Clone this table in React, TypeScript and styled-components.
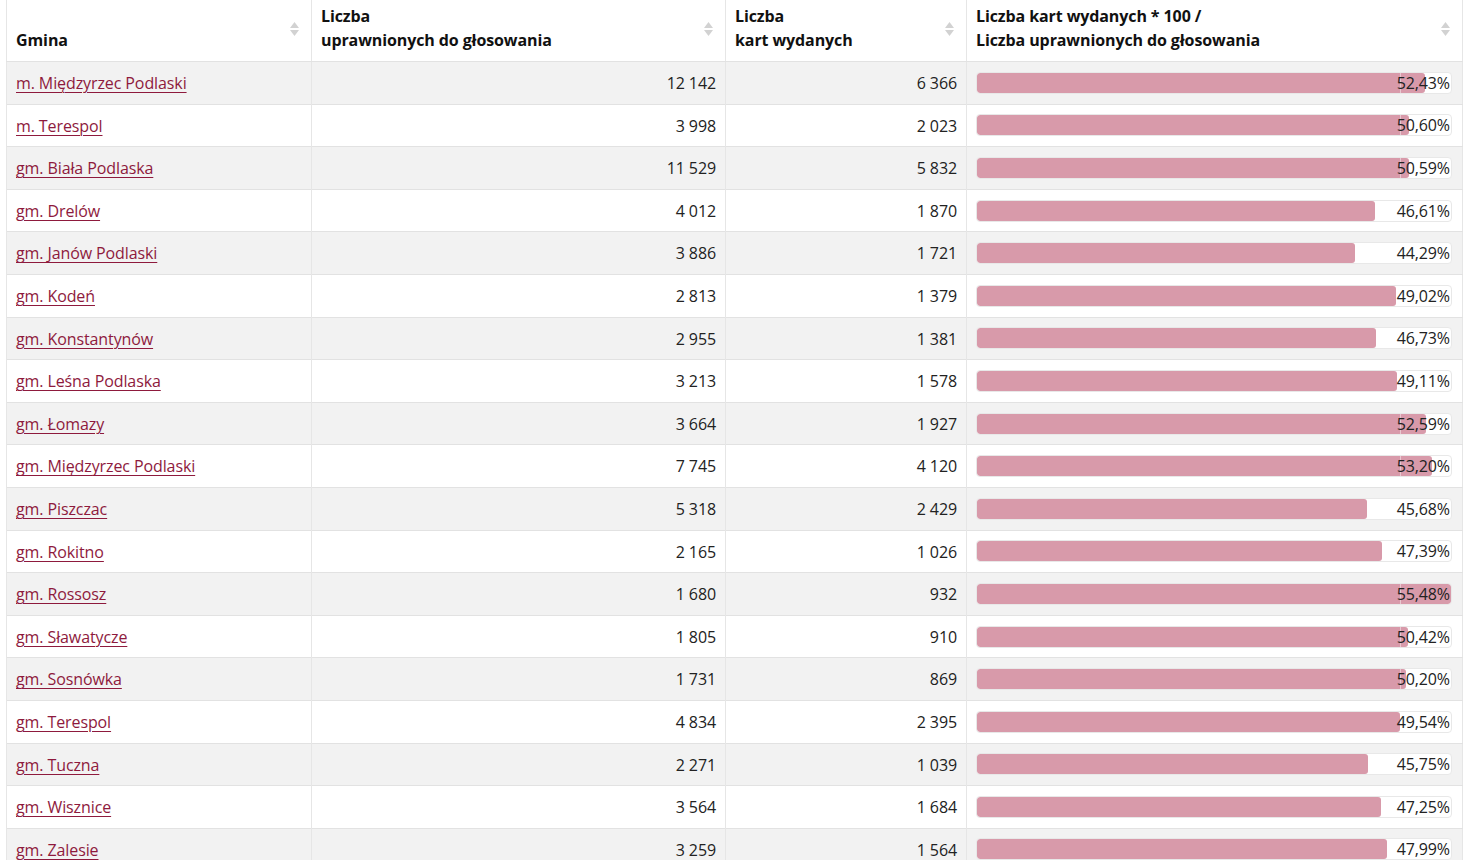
import React from 'react';
import styled, { createGlobalStyle } from 'styled-components';

type Row = { name: string; entitled: string; issued: string; pct: number };

const rows: Row[] = [
  { name: 'm. Międzyrzec Podlaski', entitled: '12 142', issued: '6 366', pct: 52.43 },
  { name: 'm. Terespol', entitled: '3 998', issued: '2 023', pct: 50.6 },
  { name: 'gm. Biała Podlaska', entitled: '11 529', issued: '5 832', pct: 50.59 },
  { name: 'gm. Drelów', entitled: '4 012', issued: '1 870', pct: 46.61 },
  { name: 'gm. Janów Podlaski', entitled: '3 886', issued: '1 721', pct: 44.29 },
  { name: 'gm. Kodeń', entitled: '2 813', issued: '1 379', pct: 49.02 },
  { name: 'gm. Konstantynów', entitled: '2 955', issued: '1 381', pct: 46.73 },
  { name: 'gm. Leśna Podlaska', entitled: '3 213', issued: '1 578', pct: 49.11 },
  { name: 'gm. Łomazy', entitled: '3 664', issued: '1 927', pct: 52.59 },
  { name: 'gm. Międzyrzec Podlaski', entitled: '7 745', issued: '4 120', pct: 53.2 },
  { name: 'gm. Piszczac', entitled: '5 318', issued: '2 429', pct: 45.68 },
  { name: 'gm. Rokitno', entitled: '2 165', issued: '1 026', pct: 47.39 },
  { name: 'gm. Rossosz', entitled: '1 680', issued: '932', pct: 55.48 },
  { name: 'gm. Sławatycze', entitled: '1 805', issued: '910', pct: 50.42 },
  { name: 'gm. Sosnówka', entitled: '1 731', issued: '869', pct: 50.2 },
  { name: 'gm. Terespol', entitled: '4 834', issued: '2 395', pct: 49.54 },
  { name: 'gm. Tuczna', entitled: '2 271', issued: '1 039', pct: 45.75 },
  { name: 'gm. Wisznice', entitled: '3 564', issued: '1 684', pct: 47.25 },
  { name: 'gm. Zalesie', entitled: '3 259', issued: '1 564', pct: 47.99 },
];

const maxPct = Math.max(...rows.map(r => r.pct));
const avgPct = 49.54;

const fmt = (n: string) => n.replace(' ', '\u00a0');
const fmtPct = (p: number) => p.toFixed(2).replace('.', ',') + '%';

const SortIcon: React.FC = () => (
  <SortBox>
    <svg width="9" height="14" viewBox="0 0 9 14">
      <path d="M4.5 0 L9 6 L0 6 Z" fill="#d2d2d2" />
      <path d="M0 8 L9 8 L4.5 14 Z" fill="#d2d2d2" />
    </svg>
  </SortBox>
);

const App: React.FC = () => {
  return (
    <Page>
      <GlobalStyle />
      <Table>
        <colgroup>
          <col style={{ width: 305 }} />
          <col style={{ width: 414 }} />
          <col style={{ width: 241 }} />
          <col />
        </colgroup>
        <thead>
          <tr>
            <Th>
              Gmina
              <SortIcon />
            </Th>
            <Th>
              Liczba
              <br />
              uprawnionych do głosowania
              <SortIcon />
            </Th>
            <Th>
              Liczba
              <br />
              kart wydanych
              <SortIcon />
            </Th>
            <Th>
              Liczba kart wydanych * 100 /
              <br />
              Liczba uprawnionych do głosowania
              <SortIcon />
            </Th>
          </tr>
        </thead>
        <tbody>
          {rows.map((r, i) => (
            <Tr key={r.name} $striped={i % 2 === 0}>
              <Td>
                <NameLink href="#">{r.name}</NameLink>
              </Td>
              <Td $num>{fmt(r.entitled)}</Td>
              <Td $num>{fmt(r.issued)}</Td>
              <BarTd>
                <Track>
                  <Fill style={{ width: `${(r.pct / maxPct) * 100}%` }} />
                  <AvgMark style={{ left: `${(avgPct / maxPct) * 100}%` }} />
                  <PctLabel>{fmtPct(r.pct)}</PctLabel>
                </Track>
              </BarTd>
            </Tr>
          ))}
        </tbody>
      </Table>
    </Page>
  );
};

const GlobalStyle = createGlobalStyle`
  html, body {
    margin: 0;
    padding: 0;
    background: #fff;
  }
  body {
    font-family: "Open Sans", "Noto Sans", Arial, sans-serif;
    color: #222;
    overflow: hidden;
  }
`;

const Page = styled.div`
  padding: 0 9px 0 6px;
  width: 1472px;
  box-sizing: border-box;
`;

const Table = styled.table`
  width: 1457px;
  border-collapse: collapse;
  table-layout: fixed;
  font-size: 16px;
  border-left: 1px solid #e6e6e6;
  border-right: 1px solid #e6e6e6;
`;

const Th = styled.th`
  position: relative;
  text-align: left;
  vertical-align: bottom;
  font-weight: 700;
  color: #111;
  line-height: 24px;
  letter-spacing: -0.1px;
  padding: 4px 30px 9px 9px;
  border-left: 1px solid #e6e6e6;
  border-bottom: 1px solid #e2e2e2;
  font-size: 16px;
`;

const SortBox = styled.span`
  position: absolute;
  right: 12px;
  top: 22px;
  display: block;
  line-height: 0;
`;

const Tr = styled.tr<{ $striped: boolean }>`
  background: ${p => (p.$striped ? '#f2f2f2' : '#fff')};
  border-bottom: 1px solid #e2e2e2;
`;

const Td = styled.td<{ $num?: boolean }>`
  padding: 9px 9px 7px;
  line-height: 25.6px;
  height: 25.6px;
  border-left: 1px solid #e6e6e6;
  text-align: ${p => (p.$num ? 'right' : 'left')};
  color: #222;
  white-space: nowrap;
  letter-spacing: -0.1px;
`;

const NameLink = styled.a`
  color: #8e1a3d;
  text-decoration: underline;
  text-underline-offset: 3px;
  text-decoration-thickness: 1px;
`;

const BarTd = styled.td`
  padding: 0 10px 0 9px;
  vertical-align: middle;
  border-left: 1px solid #e6e6e6;
`;

const Track = styled.div`
  position: relative;
  height: 22px;
  background: #fff;
  border: 1px solid #e8e8e8;
  border-radius: 4px;
  box-sizing: border-box;
  overflow: hidden;
`;

const Fill = styled.div`
  height: 100%;
  background: #d89aaa;
  border-radius: 3px;
`;

const AvgMark = styled.div`
  position: absolute;
  top: 0;
  bottom: 0;
  width: 1px;
  background: rgba(255, 255, 255, 0.45);
`;

const PctLabel = styled.span`
  position: absolute;
  right: 1px;
  top: 50%;
  transform: translateY(-50%);
  line-height: 20px;
  color: #222;
  font-size: 16px;
  letter-spacing: -0.1px;
`;

export default App;
